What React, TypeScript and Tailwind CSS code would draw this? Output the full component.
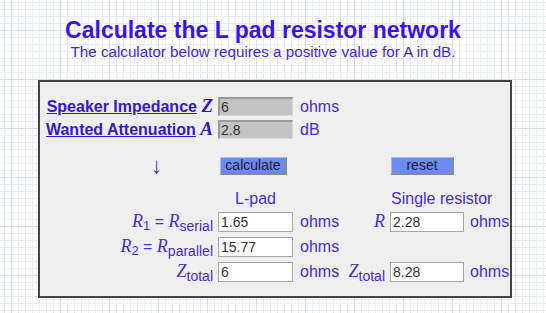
import React from "react";

const sans = "font-['Liberation_Sans',Arial,sans-serif]";
const serif = "font-['Liberation_Serif','Times_New_Roman',serif]";

function GrayInput({ value }: { value: string }) {
  return (
    <div className="w-[75px] h-[19px] bg-[#c3c3c3] border-t-2 border-l-2 border-b border-r border-t-[#9a9a9a] border-l-[#9a9a9a] border-b-[#dadada] border-r-[#dadada] text-[14px] leading-[16px] text-[#333] pl-[1px]">
      {value}
    </div>
  );
}

function WhiteInput({ value, w = "w-[75px]" }: { value: string; w?: string }) {
  return (
    <div className={`${w} h-[20px] bg-white border border-[#a6a6a6] text-[14px] leading-[18px] text-[#333] pl-[2px]`}>
      {value}
    </div>
  );
}

function Btn({ label, w }: { label: string; w: string }) {
  return (
    <div className={`${w} h-[18px] bg-[#6b8cf8] border-t border-l border-b-2 border-r-2 border-t-[#a8bcf8] border-l-[#a8bcf8] border-b-[#8a8a8a] border-r-[#8a8a8a] text-[14px] leading-[15px] text-[#222] text-center`}>
      {label}
    </div>
  );
}

export default function App() {
  const txt = "text-[#4a2ad6]";
  return (
    <div
      className={`${sans} w-full h-[313px] overflow-hidden bg-white bg-[linear-gradient(to_right,#d3e0e8_1px,transparent_1px),linear-gradient(to_bottom,#d3e0e8_1px,transparent_1px),linear-gradient(to_right,#e6eef3_1px,transparent_1px),linear-gradient(to_bottom,#e6eef3_1px,transparent_1px)] bg-[size:49px_49px,49px_49px,7px_7px,7px_7px] bg-[position:11px_30px,11px_30px,4px_2px,4px_2px]`}
    >
      <div className="flex flex-col items-center pt-[18px] pr-[20px]">
        <div className="text-[23px] leading-[25px] font-bold text-[#3a10f0]">
          Calculate the L pad resistor network
        </div>
        <div className="text-[15.2px] leading-[18px] text-[#4a1fe0]">
          The calculator below requires a positive value for A in dB.
        </div>
      </div>

      <div className={`ml-[38px] mt-[19px] w-[474px] h-[218px] bg-[#efefef] border-2 border-[#444] ${txt} text-[16px]`}>
        <div className="pt-[13px] flex flex-col">
          {/* Row 1 */}
          <div className="flex items-center h-[23px]">
            <div className="w-[173px] text-right font-bold">
              <span className="underline text-[#3418cc]">Speaker Impedance</span>{" "}
              <span className={`${serif} italic text-[19px] text-[#3418cc]`}>Z</span>
            </div>
            <div className="ml-[5px]"><GrayInput value="6" /></div>
            <div className="ml-[7px]">ohms</div>
          </div>
          {/* Row 2 */}
          <div className="flex items-center h-[23px]">
            <div className="w-[173px] text-right font-bold">
              <span className="underline text-[#3418cc]">Wanted Attenuation</span>{" "}
              <span className={`${serif} italic text-[19px] text-[#3418cc]`}>A</span>
            </div>
            <div className="ml-[5px]"><GrayInput value="2.8" /></div>
            <div className="ml-[7px]">dB</div>
          </div>
          {/* Row 3 */}
          <div className="flex items-center h-[20px] mt-[15px]">
            <div className="w-[173px] flex justify-center pl-[60px] text-[22px] leading-[20px]">↓</div>
            <div className="ml-[7px]"><Btn label="calculate" w="w-[67px]" /></div>
            <div className="ml-[104px]"><Btn label="reset" w="w-[63px]" /></div>
          </div>
          {/* Row 4 */}
          <div className="flex items-center h-[20px] mt-[13px]">
            <div className="w-[178px]" />
            <div className="w-[75px] text-center">L-pad</div>
            <div className="w-[98px]" />
            <div>Single resistor</div>
          </div>
          {/* Row 5 */}
          <div className="flex items-center h-[25px]">
            <div className="w-[173px] text-right">
              <span className={`${serif} italic text-[18px]`}>R</span>
              <sub className="text-[13px]">1</sub> ={" "}
              <span className={`${serif} italic text-[18px]`}>R</span>
              <sub className="text-[14px]">serial</sub>
            </div>
            <div className="ml-[5px]"><WhiteInput value="1.65" /></div>
            <div className="ml-[7px] w-[45px]">ohms</div>
            <div className="w-[40px] text-right">
              <span className={`${serif} italic text-[18px]`}>R</span>
            </div>
            <div className="ml-[5px]"><WhiteInput value="2.28" w="w-[74px]" /></div>
            <div className="ml-[6px]">ohms</div>
          </div>
          {/* Row 6 */}
          <div className="flex items-center h-[25px]">
            <div className="w-[173px] text-right">
              <span className={`${serif} italic text-[18px]`}>R</span>
              <sub className="text-[13px]">2</sub> ={" "}
              <span className={`${serif} italic text-[18px]`}>R</span>
              <sub className="text-[14px]">parallel</sub>
            </div>
            <div className="ml-[5px]"><WhiteInput value="15.77" /></div>
            <div className="ml-[7px]">ohms</div>
          </div>
          {/* Row 7 */}
          <div className="flex items-center h-[25px]">
            <div className="w-[173px] text-right">
              <span className={`${serif} italic text-[18px]`}>Z</span>
              <sub className="text-[14px]">total</sub>
            </div>
            <div className="ml-[5px]"><WhiteInput value="6" /></div>
            <div className="ml-[7px] w-[45px]">ohms</div>
            <div className="w-[40px] text-right whitespace-nowrap">
              <span className={`${serif} italic text-[18px]`}>Z</span>
              <sub className="text-[14px]">total</sub>
            </div>
            <div className="ml-[5px]"><WhiteInput value="8.28" w="w-[74px]" /></div>
            <div className="ml-[6px]">ohms</div>
          </div>
        </div>
      </div>
    </div>
  );
}
